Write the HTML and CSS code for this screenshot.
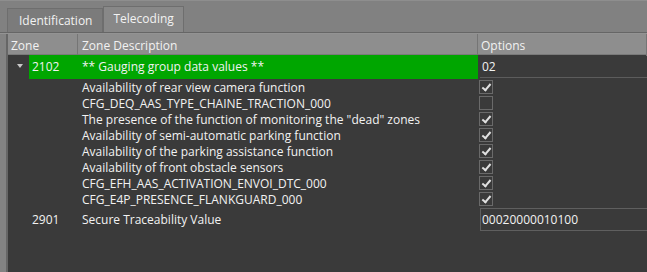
FILE: index.html
```html
<!DOCTYPE html>
<html lang="en">
<head>
    <meta charset="UTF-8">
    <title>Telecoding</title>
    <link rel="stylesheet" href="styles.css">
</head>
<body>
    <div class="tabs">
        <div class="tab">Identification</div>
        <div class="tab active">Telecoding</div>
    </div>
    <div class="panel">
        <div class="gutter"></div>
        <div class="tree">
            <div class="head">
                <div class="hcell">Zone</div>
                <div class="hcell">Zone Description</div>
                <div class="hcell">Options</div>
            </div>

            <div class="row group">
                <div class="indent"><span class="arrow"></span></div>
                <div class="zone sel">2102</div>
                <div class="desc sel">** Gauging group data values **</div>
                <div class="opt"><div class="field top">02</div></div>
            </div>

            <div class="row child">
                <div class="indent"></div><div class="zone"></div>
                <div class="desc">Availability of rear view camera function</div>
                <div class="opt"><span class="check on"></span></div>
            </div>
            <div class="row child">
                <div class="indent"></div><div class="zone"></div>
                <div class="desc">CFG_DEQ_AAS_TYPE_CHAINE_TRACTION_000</div>
                <div class="opt"><span class="check"></span></div>
            </div>
            <div class="row child">
                <div class="indent"></div><div class="zone"></div>
                <div class="desc">The presence of the function of monitoring the "dead" zones</div>
                <div class="opt"><span class="check on"></span></div>
            </div>
            <div class="row child">
                <div class="indent"></div><div class="zone"></div>
                <div class="desc">Availability of semi-automatic parking function</div>
                <div class="opt"><span class="check on"></span></div>
            </div>
            <div class="row child">
                <div class="indent"></div><div class="zone"></div>
                <div class="desc">Availability of the parking assistance function</div>
                <div class="opt"><span class="check on"></span></div>
            </div>
            <div class="row child">
                <div class="indent"></div><div class="zone"></div>
                <div class="desc">Availability of front obstacle sensors</div>
                <div class="opt"><span class="check on"></span></div>
            </div>
            <div class="row child">
                <div class="indent"></div><div class="zone"></div>
                <div class="desc">CFG_EFH_AAS_ACTIVATION_ENVOI_DTC_000</div>
                <div class="opt"><span class="check on"></span></div>
            </div>
            <div class="row child">
                <div class="indent"></div><div class="zone"></div>
                <div class="desc">CFG_E4P_PRESENCE_FLANKGUARD_000</div>
                <div class="opt"><span class="check on"></span></div>
            </div>

            <div class="row group last">
                <div class="indent"></div>
                <div class="zone">2901</div>
                <div class="desc">Secure Traceability Value</div>
                <div class="opt"><div class="field boxed">00020000010100</div></div>
            </div>
        </div>
    </div>
</body>
</html>
```

FILE: styles.css
```css
body {
    margin: 0;
    width: 647px;
    height: 272px;
    overflow: hidden;
    background: #818181;
    font-family: 'Open Sans', sans-serif;
    font-size: 12px;
    color: #f2f2f2;
}

.tabs {
    height: 33px;
    display: flex;
    align-items: flex-end;
    padding-left: 7px;
    border-top: 1px solid #8e8e8e;
    border-bottom: 1px solid #666666;
    box-sizing: border-box;
}

.tab {
    height: 23px;
    padding: 0 10px 0 11px;
    display: flex;
    align-items: center;
    background: #7b7b7b;
    border: 1px solid #6e6e6e;
    border-bottom: none;
    font-size: 12px;
}

.tab.active {
    height: 26px;
    background: #888888;
    padding: 0 9px 2px 9px;
    box-sizing: border-box;
}

.panel {
    display: flex;
    height: 239px;
    border-top: 1px solid #939393;
}

.gutter {
    width: 6px;
    background: #838383;
    border-right: 2px solid #666666;
}

.tree {
    flex: 1;
    background: #3a3a3a;
}

.head {
    display: grid;
    grid-template-columns: 70px 400px 1fr;
    height: 20px;
    background: #8e8e8e;
    border-bottom: 1px solid #7a7a7a;
}

.hcell {
    padding: 1px 0 0 3px;
    line-height: 21px;
    border-right: 1px solid #757575;
}

.hcell:nth-child(2) {
    padding-left: 4px;
}

.row {
    display: grid;
    grid-template-columns: 21px 49px 400px 1fr;
    height: 16px;
    line-height: 16px;
}

.row.group {
    height: 24px;
    line-height: 23px;
}

.row.last {
    line-height: 26px;
}

.row.child .desc {
    line-height: 17px;
}

.zone {
    padding-left: 3px;
}

.desc {
    padding-left: 4px;
    white-space: nowrap;
}

.sel {
    background: #00a600;
}

.indent {
    position: relative;
}

.arrow {
    position: absolute;
    left: 9px;
    top: 9px;
    border-left: 3px solid transparent;
    border-right: 3px solid transparent;
    border-top: 4px solid #c8c8c8;
}

.opt {
    padding-left: 2px;
}

.field {
    padding-left: 2px;
    height: 23px;
    box-sizing: border-box;
}

.field.top {
    border-bottom: 1px solid #5c5c5c;
}

.field.boxed {
    margin-top: 1px;
    border: 1px solid #5f5f5f;
    border-right: none;
    line-height: 21px;
    padding-left: 1px;
}

.check {
    display: inline-block;
    width: 12px;
    height: 12px;
    margin-left: -1px;
    margin-top: 1px;
    vertical-align: top;
    border: 1px solid #6a6a6a;
    position: relative;
}

.check.on::after {
    content: "";
    position: absolute;
    left: 4px;
    top: 1px;
    width: 3px;
    height: 7px;
    border-right: 2px solid #e0e0e0;
    border-bottom: 2px solid #e0e0e0;
    transform: rotate(40deg);
}
```
